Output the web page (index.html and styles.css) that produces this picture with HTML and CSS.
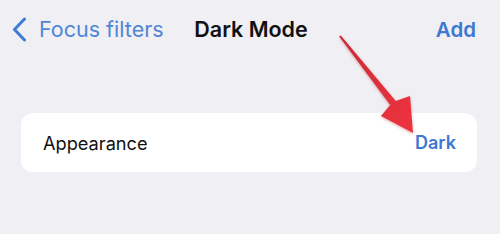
FILE: index.html
```html
<!DOCTYPE html>
<html lang="en">

<head>
     <meta charset="UTF-8">
     <meta name="viewport" content="width=device-width, initial-scale=1.0">
     <title>Dark Mode</title>
     <link rel="stylesheet" href="styles.css">
</head>

<body>
     <div class="screen">
          <div class="nav">
               <div class="back">
                    <svg class="chevron" width="15" height="25" viewBox="0 0 15 25">
                         <path d="M12.5 2 L2.5 12.5 L12.5 23" fill="none" stroke="#3f7bd6" stroke-width="3" stroke-linecap="round" stroke-linejoin="round" />
                    </svg>
                    <span>Focus filters</span>
               </div>
               <div class="title">Dark Mode</div>
               <div class="add">Add</div>
          </div>

          <div class="card">
               <span class="label">Appearance</span>
               <span class="value">Dark</span>
          </div>

          <!-- annotation arrow drawn over the screenshot -->
          <svg class="arrow" width="500" height="234" viewBox="0 0 500 234">
               <defs>
                    <linearGradient id="red" x1="0" y1="0" x2="1" y2="1">
                         <stop offset="0" stop-color="#c92a35" />
                         <stop offset="1" stop-color="#ee3440" />
                    </linearGradient>
                    <filter id="shadow" x="-20%" y="-20%" width="140%" height="140%">
                         <feDropShadow dx="0" dy="1" stdDeviation="1.5" flood-color="#b00010" flood-opacity="0.35" />
                    </filter>
               </defs>
               <polygon points="339.2,36.6 340.8,35.4 395.8,100.9 410,96 413,133 381,116 390.2,105.1" fill="url(#red)" filter="url(#shadow)" />
          </svg>
     </div>
</body>

</html>
```

FILE: styles.css
```css
body {
     margin: 0;
     background: #efeff4;
     font-family: Inter, 'Noto Sans', sans-serif;
}

.screen {
     position: relative;
     width: 500px;
     height: 234px;
     overflow: hidden;
}

.nav {
     display: grid;
     grid-template-columns: 1fr auto 1fr;
     align-items: center;
     height: 58px;
     padding: 0 10px 0 12px;
}

.back {
     display: flex;
     align-items: center;
     gap: 12px;
     color: #4f86d6;
     font-size: 21.5px;
}

.chevron {
     display: block;
}

.title {
     font-size: 21.5px;
     font-weight: 600;
     color: #111;
}

.add {
     justify-self: end;
     margin-right: 14px;
     font-size: 20.5px;
     font-weight: 600;
     color: #3d78d2;
}

.card {
     display: flex;
     justify-content: space-between;
     align-items: center;
     height: 59px;
     margin: 55px 23px 0 21px;
     padding: 0 21px 0 22px;
     background: #fff;
     border-radius: 12px;
}

.label {
     font-size: 18.2px;
     color: #111;
}

.value {
     font-size: 18px;
     font-weight: 600;
     color: #3d78d2;
}

.arrow {
     position: absolute;
     left: 0;
     top: 0;
     pointer-events: none;
}
```
